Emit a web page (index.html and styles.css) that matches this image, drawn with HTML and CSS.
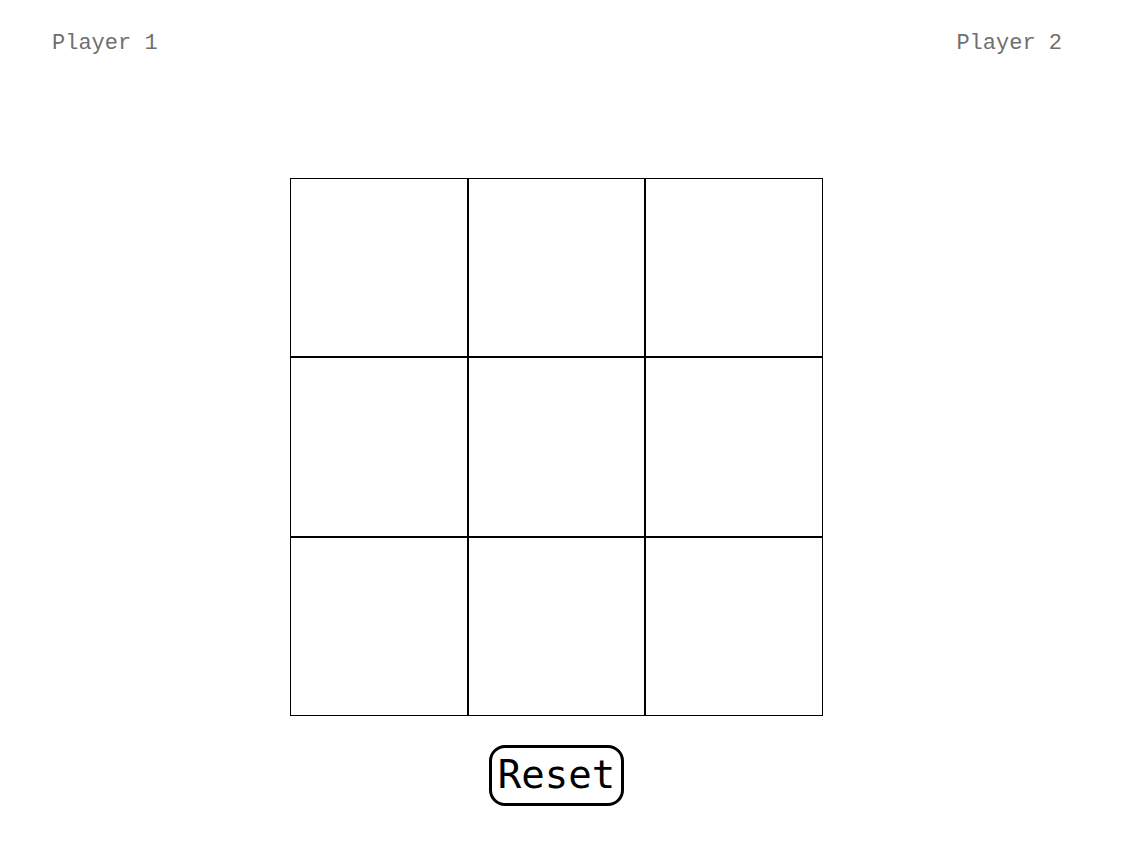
FILE: index.html
```html
<!DOCTYPE html>
<html>
<head>
<meta charset="utf-8">
<link rel="stylesheet" href="styles.css">
</head>
<body>
<div class="players">
  <div class="player">Player 1</div>
  <div class="player">Player 2</div>
</div>
<div class="game">
  <div class="board">
    <div class="cell"></div><div class="cell"></div><div class="cell"></div>
    <div class="cell"></div><div class="cell"></div><div class="cell"></div>
    <div class="cell"></div><div class="cell"></div><div class="cell"></div>
  </div>
  <button class="reset">Reset</button>
</div>
</body>
</html>
```
FILE: styles.css
```css
html, body {
  margin: 0;
  padding: 0;
  background: #fff;
}
body {
  font-family: "Liberation Mono", monospace;
}
.players {
  display: flex;
  justify-content: space-between;
  padding: 31px 69px 0 52px;
}
.player {
  font-size: 22px;
  color: #6f6f6f;
  line-height: 25px;
}
.game {
  display: flex;
  flex-direction: column;
  align-items: center;
  gap: 29px;
  width: 533px;
  margin: 122px 0 0 290px;
}
.board {
  display: grid;
  grid-template-columns: repeat(3, 1fr);
  grid-template-rows: repeat(3, 1fr);
  width: 533px;
  height: 538px;
}
.cell {
  border: 1px solid #000;
}
.reset {
  font-family: "DejaVu Sans Mono", monospace;
  font-size: 39px;
  color: #000;
  background: #fff;
  border: 3px solid #000;
  border-radius: 16px;
  width: 135px;
  height: 61px;
  padding: 0 0 3px;
  line-height: 1;
}
```
